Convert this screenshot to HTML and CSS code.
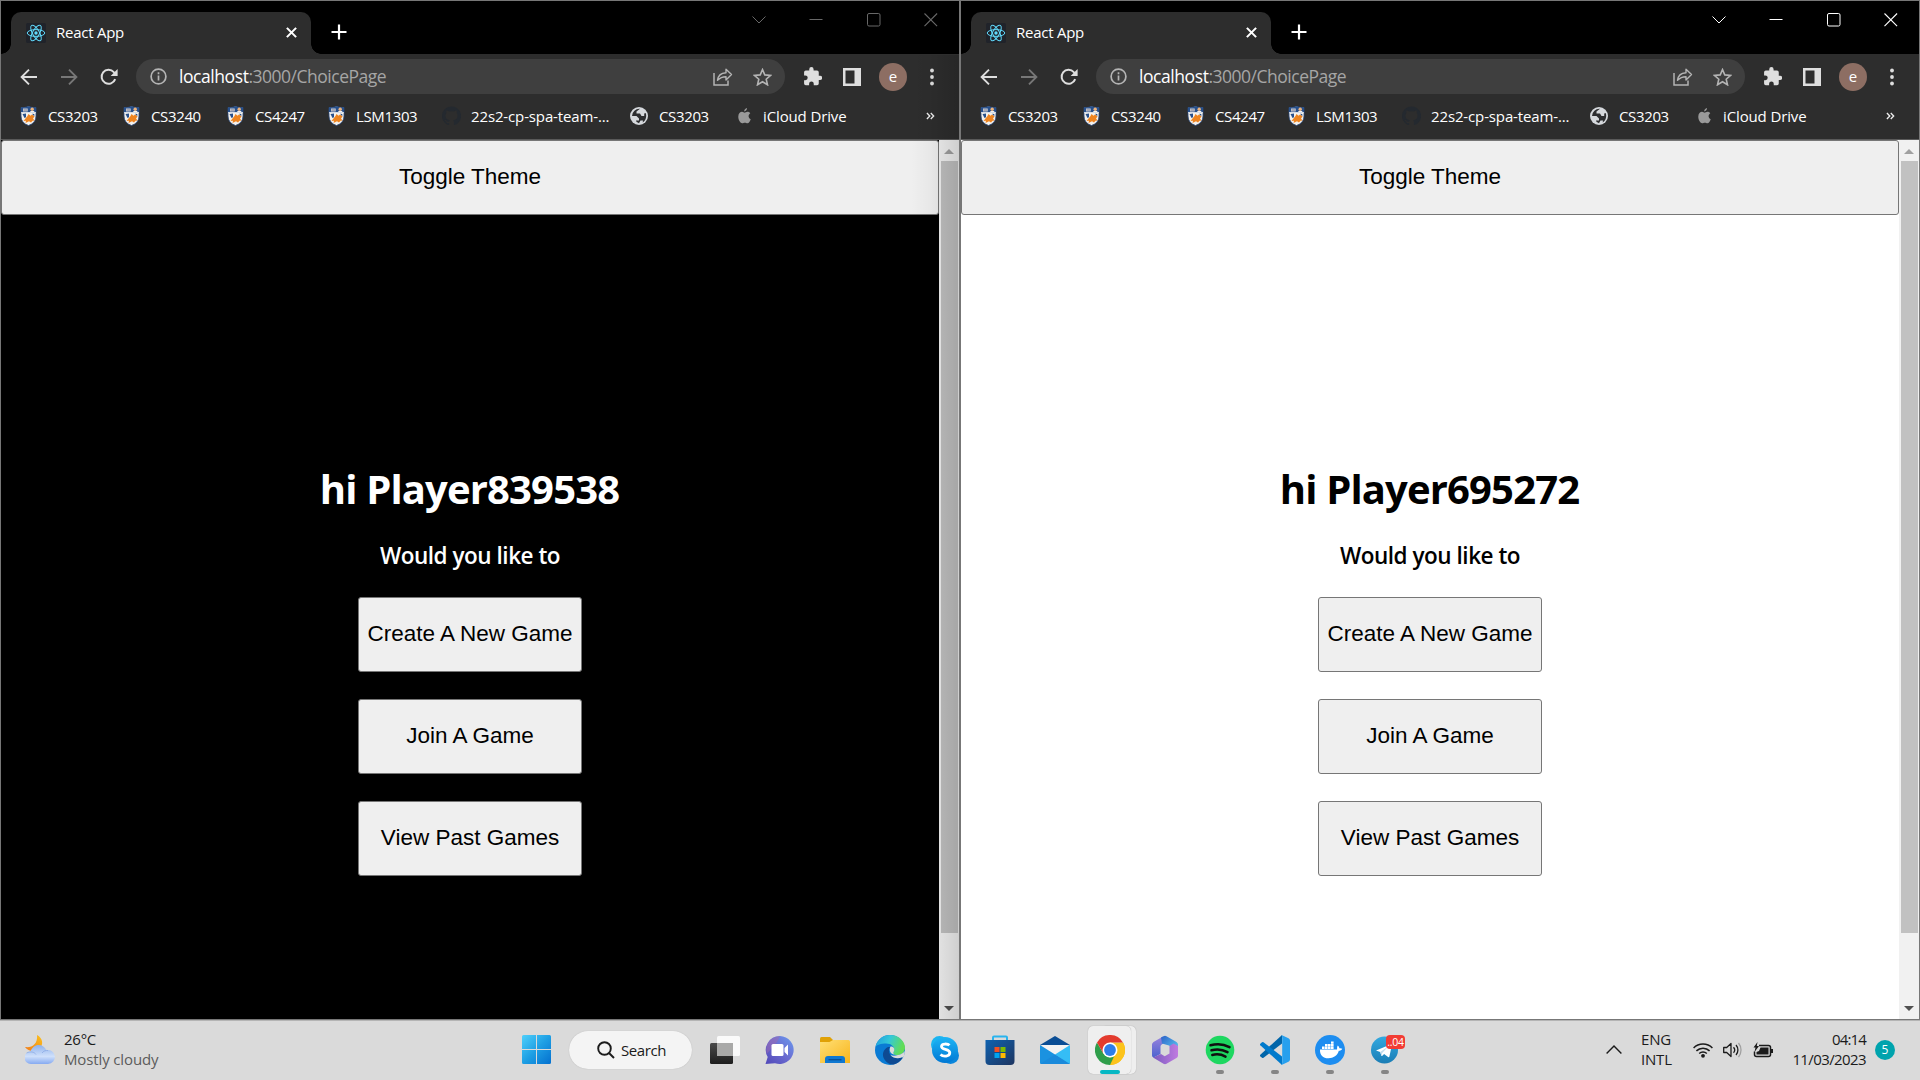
FILE: index.html
```html
<!DOCTYPE html>
<html lang="en">
<head>
<meta charset="utf-8">
<title>React App</title>
<link rel="stylesheet" href="styles.css">
</head>
<body>
<svg class="defs" aria-hidden="true">
  <symbol id="react" viewBox="0 0 20 20"><rect width="20" height="20" rx="1.5" fill="#20232a"/><g fill="none" stroke="#61dafb" stroke-width="1"><ellipse cx="10" cy="10" rx="8.8" ry="3.4"/><ellipse cx="10" cy="10" rx="8.8" ry="3.4" transform="rotate(60 10 10)"/><ellipse cx="10" cy="10" rx="8.8" ry="3.4" transform="rotate(120 10 10)"/></g><circle cx="10" cy="10" r="1.7" fill="#61dafb"/></symbol>
  <symbol id="cross" viewBox="0 0 10 10"><path d="M.8.8l8.4 8.4M9.2.8L.8 9.2" fill="none" stroke="currentColor" stroke-width="1.9"/></symbol>
  <symbol id="plus" viewBox="0 0 16 16"><path d="M8 .5v15M.5 8h15" stroke="currentColor" stroke-width="2.2"/></symbol>
  <symbol id="chev" viewBox="0 0 14 14"><path d="M.5 3.5l6.5 6.5 6.5-6.5" fill="none" stroke="currentColor" stroke-width="1"/></symbol>
  <symbol id="min" viewBox="0 0 14 14"><path d="M.5 6.5h13" stroke="currentColor"/></symbol>
  <symbol id="max" viewBox="0 0 14 14"><rect x=".5" y=".5" width="12.5" height="12.5" rx="1.5" fill="none" stroke="currentColor"/></symbol>
  <symbol id="close" viewBox="0 0 14 14"><path d="M.5.5l12.6 12.6M13.1.5L.5 13.1" stroke="currentColor" stroke-width="1.1"/></symbol>
  <symbol id="arrow" viewBox="0 0 18 18"><path d="M17 9H2M9 1.6L1.6 9 9 16.4" fill="none" stroke="currentColor" stroke-width="1.9"/></symbol>
  <symbol id="reload" viewBox="0 0 18 18"><path d="M15.2 11.2A7 7 0 1 1 13.8 4.1L16 6.3" fill="none" stroke="currentColor" stroke-width="2"/><path d="M17.6 1v7h-7z" fill="currentColor"/></symbol>
  <symbol id="info" viewBox="0 0 17 17"><circle cx="8.5" cy="8.5" r="7.4" fill="none" stroke="currentColor" stroke-width="1.7"/><path d="M8.5 7.5v5M8.5 4.3v1.9" stroke="currentColor" stroke-width="1.7"/></symbol>
  <symbol id="share" viewBox="0 0 20 18"><path d="M1 5v12h14v-4.5" fill="none" stroke="currentColor" stroke-width="1.5"/><path d="M4.5 12.3C5 7.5 8.500 5 13 4.700V1.200l5.500 5.400L13 12V8.700c-3.500 0-6 .9-8.500 3.600z" fill="none" stroke="currentColor" stroke-width="1.4" stroke-linejoin="round"/></symbol>
  <symbol id="star" viewBox="0 0 19 18"><path d="M9.500 1.600l2.300 5.300 5.700.5-4.300 3.800 1.300 5.600-5-3-5 3 1.300-5.600L1.500 7.400l5.700-.5z" fill="none" stroke="currentColor" stroke-width="1.600"/></symbol>
  <symbol id="puzzle" viewBox="1 1 21.500 22"><path d="M20.500 11H19V7a2 2 0 0 0-2-2h-4V3.500a2.500 2.500 0 0 0-5 0V5H4a2 2 0 0 0-2 2v3.800h1.500a2.700 2.700 0 0 1 0 5.400H2V20a2 2 0 0 0 2 2h3.800v-1.500a2.700 2.700 0 0 1 5.400 0V22H17a2 2 0 0 0 2-2v-4h1.500a2.500 2.500 0 0 0 0-5z" fill="currentColor"/></symbol>
  <symbol id="panel" viewBox="0 0 18 18"><path d="M0 0h18v18H0zM2.500 2.500v13H11.500v-13z" fill="currentColor" fill-rule="evenodd"/></symbol>
  <symbol id="dots" viewBox="0 0 4 18"><circle cx="2" cy="2.500" r="1.900" fill="currentColor"/><circle cx="2" cy="9" r="1.900" fill="currentColor"/><circle cx="2" cy="15.500" r="1.900" fill="currentColor"/></symbol>
  <symbol id="shield" viewBox="0 0 18 20"><path d="M1.500 1.500Q5 2 9 .5q4 1.500 7.500 1V10q0 7-7.500 9.500Q1.500 17 1.500 10z" fill="#f4f1ec" stroke="#27477c" stroke-width=".8"/><path d="M1.500 1.500Q5 2 9 .5q4 1.500 7.500 1V6.500h-15z" fill="#27508c"/><path d="M3.500 2.500h4.700v3H3.500z" fill="#d4d2d6"/><path d="M4 3.600h3.600M4 4.700h3.600" stroke="#6d7690" stroke-width=".5"/><circle cx="12.700" cy="3.300" r="1.700" fill="#eab27c"/><path d="M10.800 5.500h4" stroke="#f4f1ec"/><path d="M1.500 6.700h15" stroke="#fff" stroke-width=".8"/><path d="M3 8l3.500-.5v3.700L5 12zM12.500 7.700l2.300.3v2.500z" fill="#27508c"/><path d="M6 12.500l2-2.500 1-2 2 1.800 1.500-1.300 2.500 2-1.500 2 1.500 2-2 .3-1.500 1.700-2-1.200-3.500 1.700.5-2.300-2.500.3z" fill="#ee8420"/></symbol>
  <symbol id="github" viewBox="0 0 16 16"><path fill="#24292f" d="M8 0C3.580 0 0 3.580 0 8c0 3.540 2.290 6.530 5.470 7.590.4.070.55-.17.55-.38v-1.330c-2.230.48-2.700-1.070-2.700-1.070-.36-.93-.89-1.180-.89-1.180-.73-.5.050-.49.050-.49.800.060 1.230.83 1.230.83.720 1.230 1.880.87 2.340.67.070-.52.280-.87.510-1.070-1.780-.2-3.640-.89-3.640-3.950 0-.87.310-1.590.82-2.150-.08-.2-.36-1.020.080-2.120 0 0 .67-.21 2.200.82a7.600 7.600 0 0 1 4 0c1.530-1.040 2.200-.82 2.200-.82.440 1.100.16 1.920.080 2.120.51.560.82 1.270.82 2.150 0 3.070-1.870 3.750-3.650 3.950.29.250.54.730.54 1.480v2.190c0 .21.150.46.550.38A8 8 0 0 0 8 0z"/></symbol>
  <symbol id="globe" viewBox="0 0 18 18"><circle cx="9" cy="9" r="9" fill="#d5d8dc"/><path d="M10 1.800L6.500 4.500v2H10l1.500 2.500h2.700V6.500l1.500-.5c1.500 4-.5 8-3 9.500l.3-2H10.500L9 16.200C7 15.500 6 14.500 6 13.500h3v-2L6.500 9H2a7.300 7.300 0 0 1 8-7.200z" fill="#2d2e30"/></symbol>
  <symbol id="apple" viewBox="0 0 14 17"><path d="M9.700 0c.1 1.800-1.200 3.600-3 3.700C6.500 2 8 .3 9.700 0zM7 4.900c.9 0 1.700-.9 3.200-.9 1.200 0 2.300.6 3 1.500-2.600 1.700-2.200 5.300.5 6.400-.7 2-2 4.400-3.500 4.400-1.100 0-1.500-.6-2.800-.6s-1.800.6-2.900.6C2.600 16.300.3 13 .3 9.400.3 5.800 2.400 4 4.400 4 5.600 4 6.400 4.900 7 4.900z" fill="#9a9a9a"/></symbol>
  <symbol id="more" viewBox="0 0 10 8"><path d="M1 .7L4.200 4 1 7.300M5.300.7L8.500 4 5.300 7.300" fill="none" stroke="#eee" stroke-width="1.500"/></symbol>
</svg>

<div class="screen">
 <div class="windows">
  <section class="win win-dark">
    <header class="tabs">
      <div class="tab"><svg class="i20"><use href="#react"/></svg><span class="tab-title">React App</span><svg class="tab-x"><use href="#cross"/></svg></div>
      <svg class="plus"><use href="#plus"/></svg>
      <div class="controls"><svg><use href="#chev"/></svg><svg><use href="#min"/></svg><svg><use href="#max"/></svg><svg><use href="#close"/></svg></div>
    </header>
    <nav class="toolbar">
      <svg class="nav-i"><use href="#arrow"/></svg><svg class="nav-i fwd"><use href="#arrow"/></svg><svg class="nav-i"><use href="#reload"/></svg>
      <div class="omni"><svg class="info"><use href="#info"/></svg><span class="url"><b>localhost</b>:3000/ChoicePage</span><svg class="share"><use href="#share"/></svg><svg class="star"><use href="#star"/></svg></div>
      <svg class="puzzle"><use href="#puzzle"/></svg><svg class="panel"><use href="#panel"/></svg><span class="avatar">e</span><svg class="dots"><use href="#dots"/></svg>
    </nav>
    <nav class="marks">
      <span class="mark"><svg><use href="#shield"/></svg>CS3203</span>
      <span class="mark"><svg><use href="#shield"/></svg>CS3240</span>
      <span class="mark"><svg><use href="#shield"/></svg>CS4247</span>
      <span class="mark"><svg><use href="#shield"/></svg>LSM1303</span>
      <span class="mark wide"><svg><use href="#github"/></svg>22s2-cp-spa-team-...</span>
      <span class="mark globe"><svg><use href="#globe"/></svg>CS3203</span>
      <span class="mark wide apple"><svg><use href="#apple"/></svg>iCloud Drive</span>
      <svg class="more"><use href="#more"/></svg>
    </nav>
    <div class="view">
      <main class="page">
        <button class="btn btn-full">Toggle Theme</button>
        <h1>hi Player839538</h1>
        <h2>Would you like to</h2>
        <div class="choices"><button class="btn">Create A New Game</button><button class="btn">Join A Game</button><button class="btn">View Past Games</button></div>
      </main>
      <div class="scroll"><i class="up"></i><i class="thumb"></i><i class="down"></i></div>
    </div>
    <div class="edge-shade"></div>
  </section>

  <section class="win win-light">
    <header class="tabs">
      <div class="tab"><svg class="i20"><use href="#react"/></svg><span class="tab-title">React App</span><svg class="tab-x"><use href="#cross"/></svg></div>
      <svg class="plus"><use href="#plus"/></svg>
      <div class="controls"><svg><use href="#chev"/></svg><svg><use href="#min"/></svg><svg><use href="#max"/></svg><svg><use href="#close"/></svg></div>
    </header>
    <nav class="toolbar">
      <svg class="nav-i"><use href="#arrow"/></svg><svg class="nav-i fwd"><use href="#arrow"/></svg><svg class="nav-i"><use href="#reload"/></svg>
      <div class="omni"><svg class="info"><use href="#info"/></svg><span class="url"><b>localhost</b>:3000/ChoicePage</span><svg class="share"><use href="#share"/></svg><svg class="star"><use href="#star"/></svg></div>
      <svg class="puzzle"><use href="#puzzle"/></svg><svg class="panel"><use href="#panel"/></svg><span class="avatar">e</span><svg class="dots"><use href="#dots"/></svg>
    </nav>
    <nav class="marks">
      <span class="mark"><svg><use href="#shield"/></svg>CS3203</span>
      <span class="mark"><svg><use href="#shield"/></svg>CS3240</span>
      <span class="mark"><svg><use href="#shield"/></svg>CS4247</span>
      <span class="mark"><svg><use href="#shield"/></svg>LSM1303</span>
      <span class="mark wide"><svg><use href="#github"/></svg>22s2-cp-spa-team-...</span>
      <span class="mark globe"><svg><use href="#globe"/></svg>CS3203</span>
      <span class="mark wide apple"><svg><use href="#apple"/></svg>iCloud Drive</span>
      <svg class="more"><use href="#more"/></svg>
    </nav>
    <div class="view">
      <main class="page">
        <button class="btn btn-full">Toggle Theme</button>
        <h1>hi Player695272</h1>
        <h2>Would you like to</h2>
        <div class="choices"><button class="btn">Create A New Game</button><button class="btn">Join A Game</button><button class="btn">View Past Games</button></div>
      </main>
      <div class="scroll"><i class="up"></i><i class="thumb"></i><i class="down"></i></div>
    </div>
  </section>
 </div>

 <footer class="taskbar">
  <div class="weather">
    <svg width="30" height="30" viewBox="0 0 30 30"><defs><linearGradient id="moon" x1="0" y1="1" x2="1" y2="0"><stop offset="0" stop-color="#f07a1a"/><stop offset="1" stop-color="#fbc21c"/></linearGradient><linearGradient id="cl" x1="0" y1="0" x2="0" y2="1"><stop offset="0" stop-color="#8fb2ec"/><stop offset=".6" stop-color="#cfe0fb"/><stop offset="1" stop-color="#86aaf0"/></linearGradient></defs><path d="M12 0c6 3 7 10 2 14-5 4-11 2-14-2 7 1 13-3 12-12z" fill="url(#moon)"/><path d="M6 29a6 6 0 0 1-.5-12.500C7 12.500 10 10 13.500 10s6.500 2 7.800 5.200A7 7 0 1 1 23 29z" fill="url(#cl)"/><path d="M1.500 18c4-2 8-1 9.500 1.500M17 18c1.500-2 4-3 6-2.500" fill="none" stroke="#7d9fe0" stroke-width="1" opacity=".6"/></svg>
    <div class="two"><span>26°C</span><span class="dim">Mostly cloudy</span></div>
  </div>
  <div class="apps">
    <svg class="start" width="30" height="30" viewBox="0 0 30 30"><defs><linearGradient id="w" x1="0" y1="0" x2="1" y2="1" gradientUnits="objectBoundingBox"><stop offset="0" stop-color="#4fd0fb"/><stop offset=".5" stop-color="#1e9fe4"/><stop offset="1" stop-color="#0470cf"/></linearGradient></defs><path d="M1.500 0H14v14H0V1.500Q0 0 1.500 0zM15 0h12.500Q29 0 29 1.500V14H15zM0 15h14v14H1.500Q0 29 0 27.500zM15 15h14v12.500q0 1.500-1.500 1.500H15z" fill="url(#w)"/></svg>
    <div class="search"><svg width="18" height="18" viewBox="0 0 18 18"><circle cx="7.500" cy="7.500" r="6.300" fill="none" stroke="#1c1c1c" stroke-width="1.900"/><path d="M12 12l5 5" stroke="#1c1c1c" stroke-width="2"/></svg><span>Search</span></div>

    <div class="app"><svg viewBox="0 0 30 30"><defs><linearGradient id="tv" x1="0" y1="0" x2="0" y2="1"><stop offset="0" stop-color="#4a4a4a"/><stop offset="1" stop-color="#1d1d1d"/></linearGradient></defs><rect y="8" width="23" height="21" rx="1.500" fill="url(#tv)"/><rect x="7" y="1" width="23" height="20" rx="1.500" fill="#fff" opacity=".85"/><rect x="7" y="8" width="16" height="13" fill="#a9a9a8"/></svg></div>
    <div class="app"><svg viewBox="0 0 30 30"><defs><linearGradient id="ch" x1="1" y1="0" x2="0" y2="1"><stop offset="0" stop-color="#6b9cf0"/><stop offset=".5" stop-color="#6a6bd0"/><stop offset="1" stop-color="#5148b8"/></linearGradient></defs><path d="M15 1a14 14 0 1 1-5 27.200L.500 29l2.200-7A14 14 0 0 1 15 1z" fill="url(#ch)"/><path d="M15 1A14 14 0 0 0 1.800 19L12 7z" fill="#a06ab0" opacity=".5"/><rect x="6.500" y="9" width="12" height="12" rx="1.500" fill="#fff"/><path d="M19.500 13l3.500-3.500v11L19.500 17z" fill="#fff"/></svg></div>
    <div class="app"><svg viewBox="0 0 30 30"><defs><linearGradient id="fo" x1="0" y1="0" x2="1" y2="1"><stop offset="0" stop-color="#ffdf74"/><stop offset="1" stop-color="#f8b51c"/></linearGradient></defs><path d="M0 3.500Q0 2 1.500 2H10l3 3v5H0z" fill="#e0a106"/><path d="M0 7h9.500L13 5h15.500Q30 5 30 6.500V28H0z" fill="url(#fo)"/><path d="M5 28v-4q0-3 3-3h14q3 0 3 3v4z" fill="#0f78d1"/><path d="M8.500 24.700h13" stroke="#0a4f94" stroke-width="1.300"/></svg></div>
    <div class="app"><svg viewBox="0 0 30 30"><defs><linearGradient id="e1" x1="0" y1="0" x2="1" y2=".3"><stop offset="0" stop-color="#1d9be0"/><stop offset=".5" stop-color="#34c8d8"/><stop offset="1" stop-color="#62dd55"/></linearGradient></defs><circle cx="15" cy="15" r="15" fill="#0a7bd4"/><path d="M.5 12C2 4.500 8 0 15 0c9 0 15 6.500 15 12.500 0 5-4 7.500-8 7.500-3.500 0-4.500-1.500-3.800-2.500.8-1 1-1.900 1-3 0-3-3-6-8-6C6 8.500 1.500 10 .5 12z" fill="url(#e1)"/><path d="M13 12c-5 2.500-6.500 8-3.500 12.500C12 28.500 16 30 19 29.400c4-1 7-4 8.500-6.400.4-.8-.3-1-1-.6-3 1.500-8.500 1-11-2.400-2-2.700-2-6-.5-8z" fill="#0e4a93"/><path d="M27.500 23c.4-.8-.3-1-1-.6-3 1.500-8.500 1-11-2.400 2 1 4.500 1 7.500 0 3-.5 5.500-2 6.500-4q1 4-2 7z" fill="#dadada"/><path d="M15.500 11.500c3 0 4.400 2 3.600 4.500-.8 1.500-1.500 2.500.5 3.500-4 0-6-4-4.100-8z" fill="#dadada"/></svg></div>
    <div class="app"><svg viewBox="0 0 30 30"><defs><linearGradient id="sk" x1="0" y1="0" x2="0" y2="1"><stop offset="0" stop-color="#1db5f5"/><stop offset="1" stop-color="#0078d4"/></linearGradient></defs><circle cx="9.500" cy="9.500" r="8.500" fill="#1bb4f0"/><circle cx="20.500" cy="20.500" r="8.500" fill="#0a86dc"/><circle cx="15" cy="15" r="13" fill="url(#sk)"/><path d="M19.500 10.300c-1.500-1.600-8-2.200-8 1.200 0 3.700 8.300 1.900 8.300 6.300 0 3.800-6.500 4.300-9.300 1.600" fill="none" stroke="#fff" stroke-width="2.800"/></svg></div>
    <div class="app"><svg viewBox="0 0 30 30"><defs><linearGradient id="st" x1="0" y1="0" x2="1" y2="1"><stop offset="0" stop-color="#0f62b0"/><stop offset="1" stop-color="#1e3560"/></linearGradient></defs><path d="M8 6V2.500Q8 1.500 9 1.500h12q1 0 1 1V6" fill="none" stroke="#29b4ee" stroke-width="2"/><path d="M.5 5h29v21q0 4-4 4h-21q-4 0-4-4z" fill="url(#st)"/><path d="M9.500 12h5v5h-5z" fill="#f25022"/><path d="M15.500 12h5v5h-5z" fill="#7fba00"/><path d="M9.500 18h5v5h-5z" fill="#00a4ef"/><path d="M15.500 18h5v5h-5z" fill="#ffb900"/></svg></div>
    <div class="app"><svg viewBox="0 0 30 30"><path d="M0 10L15 1l15 9z" fill="#0b4e95"/><path d="M2 10h26v8l-12 3L2 16z" fill="#f3f3f3"/><path d="M0 10l30 19H1.500Q0 29 0 27.500z" fill="#1b92e0"/><path d="M30 10v17.500q0 1.500-1.500 1.500L15 19.500z" fill="#35bdf5"/><path d="M0 29L15 19.500 30 29z" fill="#1a8adb"/></svg></div>
    <div class="app active"><svg viewBox="0 0 30 30"><path d="M15 15L28 7.500A15 15 0 0 1 15 30z" fill="#fbbc05"/><path d="M15 7.500h13q2 3.500 2 7.500a15 15 0 0 1-15 15l6.500-11.200z" fill="#fcc31c"/><path d="M2 7.500l6.500 11.200 6.500 3.800 4-1L15 30A15 15 0 0 1 2 7.500z" fill="#2f9e4b"/><path d="M2 7.500A15 15 0 0 1 28 7.500H15L8.500 18.700z" fill="#e33b2e"/><circle cx="15" cy="15" r="7.500" fill="#fff"/><circle cx="15" cy="15" r="5.900" fill="#2f7de9"/></svg><i class="run"></i></div>
    <div class="app"><svg viewBox="0 0 30 30"><defs><linearGradient id="m1" x1="0" y1="0" x2="0" y2="1"><stop offset="0" stop-color="#9a83dd"/><stop offset="1" stop-color="#4b63cf"/></linearGradient><linearGradient id="m2" x1="0" y1="0" x2="1" y2="1"><stop offset="0" stop-color="#2d62c8"/><stop offset="1" stop-color="#5fd0f5"/></linearGradient><linearGradient id="m3" x1="0" y1="0" x2="1" y2="0"><stop offset="0" stop-color="#7a5bc0"/><stop offset="1" stop-color="#c07be0"/></linearGradient></defs><path d="M13 1.500L3.500 7Q2 8 2 9.500v11Q2 22 3.500 22.600l7-3.600v-7.500Q10.500 10 12 9.200L17.500 6z" fill="url(#m1)"/><path d="M11 2.500l2.500-1.300q1.500-.7 3 0L26.500 7Q28 8 28 9.500V17l-9-6.500L12 8.500z" fill="url(#m2)"/><path d="M28 11v9.500q0 1.500-1.500 2.500l-10 5.800q-1.500.7-3 0L3 22.500l8-3.500 3.700 2.200L19.500 18.500V11l4-2.500z" fill="url(#m3)"/></svg></div>
    <div class="app"><svg viewBox="0 0 30 30"><circle cx="15" cy="15" r="14.300" fill="#1ed760"/><path d="M5.500 10.300c6-1.800 13.500-1.200 19 1.900M6.500 15.300c5.200-1.500 11.300-.8 16 1.900M7.300 20c4.300-1.200 9.300-.6 13.200 1.600" fill="none" stroke="#101010" stroke-width="2.500" stroke-linecap="round"/></svg><i class="run"></i></div>
    <div class="app"><svg viewBox="0 0 30 30"><path d="M22 0v8.500L3.500 22.800Q2.700 23.300 2 22.700L.3 21.200q-.7-.7 0-1.400z" fill="#0065a9"/><path d="M22 30v-8.500L3.500 7.200Q2.700 6.700 2 7.300L.3 8.800q-.7.7 0 1.400z" fill="#007acc"/><path d="M21.500 0L28.500 3.200Q30 4 30 5.500v19q0 1.500-1.500 2.300L21.500 30q.7-1 .7-3V3q0-2-.7-3z" fill="#27a0ee"/></svg><i class="run"></i></div>
    <div class="app"><svg viewBox="0 0 30 30"><circle cx="15" cy="15" r="15" fill="#1d8df0"/><path d="M5 14.500h17c.3-1.500-.2-2.800.8-4 1 .8 1.500 1.800 1.500 2.800 1.200-.2 2.200 0 3 .5-.8 1.600-2 2-3.500 2C22.500 20.500 18.500 23.300 13.500 23.300c-5.500 0-8.800-3-8.500-8.800z" fill="#fff"/><path d="M7 11.500h2.600v2.400H7zM10 11.500h2.600v2.400H10zM13 11.500h2.600v2.400H13zM16 11.500h2.600v2.400H16zM10 9h2.600v2.200H10zM13 9h2.600v2.200H13zM16 9h2.600v2.200H16zM16 6.500h2.600v2.200H16z" fill="#fff"/></svg><i class="run"></i></div>
    <div class="app"><svg viewBox="0 0 30 30"><defs><linearGradient id="tg" x1="0" y1="0" x2="0" y2="1"><stop offset="0" stop-color="#33a9e0"/><stop offset="1" stop-color="#1a7db5"/></linearGradient></defs><circle cx="14.500" cy="15" r="13.500" fill="url(#tg)"/><path d="M6 15.500L21 9.200q1-.2.900.8l-2.500 11.500q-.4 1-1.300.4l-4-3-2 2q-.6.400-.8-.4L10.200 17z" fill="#fff"/><path d="M10.200 17l8-5.500-6 6.500-.7 3z" fill="#c3dcec"/></svg><span class="badge">..04</span><i class="run"></i></div>
  </div>
  <div class="tray">
    <svg width="16" height="9" viewBox="0 0 16 9"><path d="M.6 8.400L8 1l7.400 7.400" fill="none" stroke="#1b1b1b" stroke-width="1.400"/></svg>
    <div class="two lang"><span>ENG</span><span>INTL</span></div>
    <svg class="wifi" width="20" height="16" viewBox="0 0 20 16"><g fill="none" stroke="#1b1b1b" stroke-width="1.500"><path d="M.6 6a13.300 13.300 0 0 1 18.800 0M3.400 8.900a9.300 9.300 0 0 1 13.200 0M6.200 11.500a5.400 5.400 0 0 1 7.600 0"/></g><circle cx="10" cy="13.800" r="1.900" fill="#1b1b1b"/></svg>
    <svg class="vol" width="20" height="16" viewBox="0 0 20 16"><g fill="none" stroke="#1b1b1b" stroke-width="1.300"><path d="M.7 5.500h3L8 1.500v13l-4.300-4h-3z" stroke-linejoin="round"/><path d="M10.500 5.300a4 4 0 0 1 0 5.400M13 3a7.500 7.500 0 0 1 0 10"/><path d="M15.500 1a11 11 0 0 1 0 14" opacity=".3"/></g></svg>
    <svg class="bat" width="20" height="16" viewBox="0 0 20 16"><path d="M6 3.500h9.500q2 0 2 2v7q0 2-2 2h-12q-2 0-2-2V9.500" fill="none" stroke="#1b1b1b" stroke-width="1.500"/><path d="M7.500 5.500h8v7h-12V10L6 9z" fill="#1b1b1b"/><path d="M18 7h2v4h-2z" fill="#1b1b1b"/><path d="M4.500 0L.5 5.500h2L1.500 10 6 4H3.800z" fill="#1b1b1b"/></svg>
    <div class="two clock"><span class="time">04:14</span><span class="date">11/03/2023</span></div>
    <span class="count">5</span>
  </div>
 </footer>
</div>
</body>
</html>
```
FILE: styles.css
```css
* { box-sizing: border-box; }
body { margin: 0; font-family: "Open Sans", "Noto Sans", sans-serif; font-size: 15px; overflow: hidden; }
svg { display: block; flex: none; }
.defs { position: absolute; width: 0; height: 0; }
.screen { width: 1920px; height: 1080px; display: flex; flex-direction: column; }
.windows { display: grid; grid-template-columns: 960px 960px; height: 1020px; }

/* browser window */
.win { position: relative; display: flex; flex-direction: column; border: 1px solid #777; background: #000; color: #fff; }
.edge-shade { position: absolute; right: 0; top: 54px; bottom: 0; width: 48px; background: linear-gradient(90deg, transparent, rgba(0,0,0,.03) 40%, rgba(0,0,0,.14)); }
.tabs { height: 53px; display: flex; align-items: flex-start; }
.tab { position: relative; width: 300px; height: 42px; margin: 11px 0 0 10px; padding: 0 15px; display: flex; align-items: center; background: #2d2d2d; border-radius: 10px 10px 0 0; }
.tab::before, .tab::after { content: ""; position: absolute; bottom: 0; width: 10px; height: 10px; }
.tab::before { left: -10px; background: radial-gradient(circle at 0 0, transparent 9.500px, #2d2d2d 10px); }
.tab::after { right: -10px; background: radial-gradient(circle at 100% 0, transparent 9.500px, #2d2d2d 10px); }
.i20 { width: 20px; height: 20px; }
.tab-title { margin: 0 0 2px 10px; letter-spacing: -.25px; line-height: 20px; }
.tab-x { width: 11px; height: 11px; margin: 0 -1px 1px auto; }
.plus { width: 16px; height: 16px; margin: 23px 0 0 20px; }
.controls { display: flex; gap: 43.500px; margin: 12px 21px 0 auto; }
.controls svg { width: 14px; height: 14px; }
.win-dark .controls { color: #686868; }

.toolbar { height: 44px; display: flex; align-items: center; background: #2d2d2d; color: #dedede; padding: 1px 0 0 19px; }
.nav-i { width: 18px; height: 18px; margin-right: 22px; }
.fwd { transform: scaleX(-1); color: #777; }
.omni { display: flex; align-items: center; width: 649px; height: 35px; margin-left: -4px; padding: 0 13px 0 14px; border-radius: 18px; background: #3f3f3f; color: #b4b4b4; }
.info { width: 17px; height: 17px; }
.url { margin: 0 0 1px 12px; font-size: 17.500px; line-height: 24px; letter-spacing: -.49px; color: #a6a6a6; }
.url b { font-weight: 400; color: #fff; letter-spacing: -.43px; }
.share { width: 20px; height: 18px; margin-left: auto; }
.star { width: 19px; height: 18px; margin-left: 20px; }
.puzzle { width: 19px; height: 19px; margin-left: 18px; }
.panel { width: 18px; height: 18px; margin-left: 21px; }
.avatar { width: 28px; height: 28px; margin-left: 18px; border-radius: 50%; background: #8d6e63; color: #fff; font-size: 15px; line-height: 26px; text-align: center; }
.dots { width: 4px; height: 18px; margin-left: 23px; }

.marks { height: 42px; display: grid; grid-template-columns: 103px 104px 101px 114px 189px 103px 193px 10px; align-items: center; padding: 0 0 6px 18px; background: #2d2d2d; border-bottom: 1px solid #5a5a5a; }
.mark { display: flex; align-items: center; gap: 10px; letter-spacing: -.36px; line-height: 20px; white-space: nowrap; }
.mark svg { width: 19px; height: 20px; }
.mark.wide { letter-spacing: -.13px; }
.mark.wide:not(.apple) { padding-left: 1px; }
.mark.globe svg { width: 18px; height: 18px; }
.mark.globe { gap: 11px; }
.mark.apple { padding-left: 5px; gap: 12px; }
.mark.apple svg { width: 13px; height: 16px; }
.more { width: 9px; height: 8px; }

/* page in the window */
.view { height: 879px; display: grid; grid-template-columns: 938px 20px; }
.page { display: flex; flex-direction: column; align-items: center; background: #000; color: #fff; }
.win-light .page { background: #fff; color: #000; }
.btn { display: block; width: 224px; height: 75px; padding: 0 0 2px; border: 1px solid #767676; border-radius: 3px; background: #efefef; color: #000; font: 22.500px "Liberation Sans", Arial, sans-serif; white-space: nowrap; }
.btn-full { width: 938px; }
h1 { margin: 247px 0 0; font-size: 40px; line-height: 54px; font-weight: 700; letter-spacing: -.85px; text-indent: -1px; }
h2 { margin: 25px 0 0; font-size: 22.500px; line-height: 30px; font-weight: 600; letter-spacing: -.47px; }
.choices { display: grid; gap: 27px; margin-top: 26px; }
.scroll { display: flex; flex-direction: column; align-items: center; background: #f1f1f1; }
.up, .down { width: 0; height: 0; border: 5px solid transparent; border-top: 0; border-bottom: 5px solid #a0a0a0; margin: 9px 0 7px; }
.thumb { width: 17px; height: 772px; background: #c1c1c1; }
.down { border-top: 5px solid #505050; border-bottom: 0; margin: 73px 0 0; }

/* taskbar */
.taskbar { height: 60px; display: grid; grid-template-columns: 522px 1019px 1fr; background: #dadada; border-top: 1px solid #b4b4b4; color: #1b1b1b; }
.weather { display: flex; align-items: center; gap: 9px; padding: 0 0 2px 25px; }
.two { display: flex; flex-direction: column; line-height: 20px; letter-spacing: -.25px; margin-top: -1px; }
.dim { color: #5c5c5c; letter-spacing: -.13px; }
.apps { display: flex; align-items: center; padding-bottom: 1px; }
.search { display: flex; align-items: center; gap: 6px; width: 123px; height: 38px; margin: -1px 5px 0 17px; padding-left: 28px; border-radius: 19px; background: #f4f4f4; box-shadow: 0 0 1px #aaa; letter-spacing: -.42px; }
.start { width: 30px; }
.app { position: relative; width: 55px; height: 48px; display: grid; place-items: center; }
.app svg { width: 30px; height: 30px; position: relative; }
.active::before, .active::after { content: ""; position: absolute; top: 0; height: 48px; border-radius: 5px; background: #efefef; box-shadow: 0 0 1px #999; }
.active::after { left: 6px; width: 43px; }
.active::before { left: 20px; width: 34px; }
.active svg, .active .run { z-index: 1; }
.run { position: absolute; bottom: 0; left: 23.500px; width: 8px; height: 4px; border-radius: 2px; background: #858585; }
.active .run { left: 17.500px; width: 20px; background: #06b8c4; }
.badge { position: absolute; left: 29px; top: 9px; width: 19px; height: 14px; border-radius: 4px; background: #f23c34; color: #fff; font-size: 10.500px; line-height: 14px; text-align: center; letter-spacing: -.2px; }
.tray { display: flex; align-items: center; padding: 0 0 2px 65px; }
.lang { margin-left: 19px; width: 52px; letter-spacing: -.2px; }
.vol { margin-left: 10px; }
.bat { margin-left: 10px; }
.clock { width: 91px; align-items: flex-end; margin-left: 2px; }
.time { letter-spacing: -.85px; }
.date { letter-spacing: -.6px; }
.count { width: 20px; height: 20px; margin-left: 9px; border-radius: 50%; background: #00a3ad; color: #fff; font-size: 12px; line-height: 20px; text-align: center; }
```
